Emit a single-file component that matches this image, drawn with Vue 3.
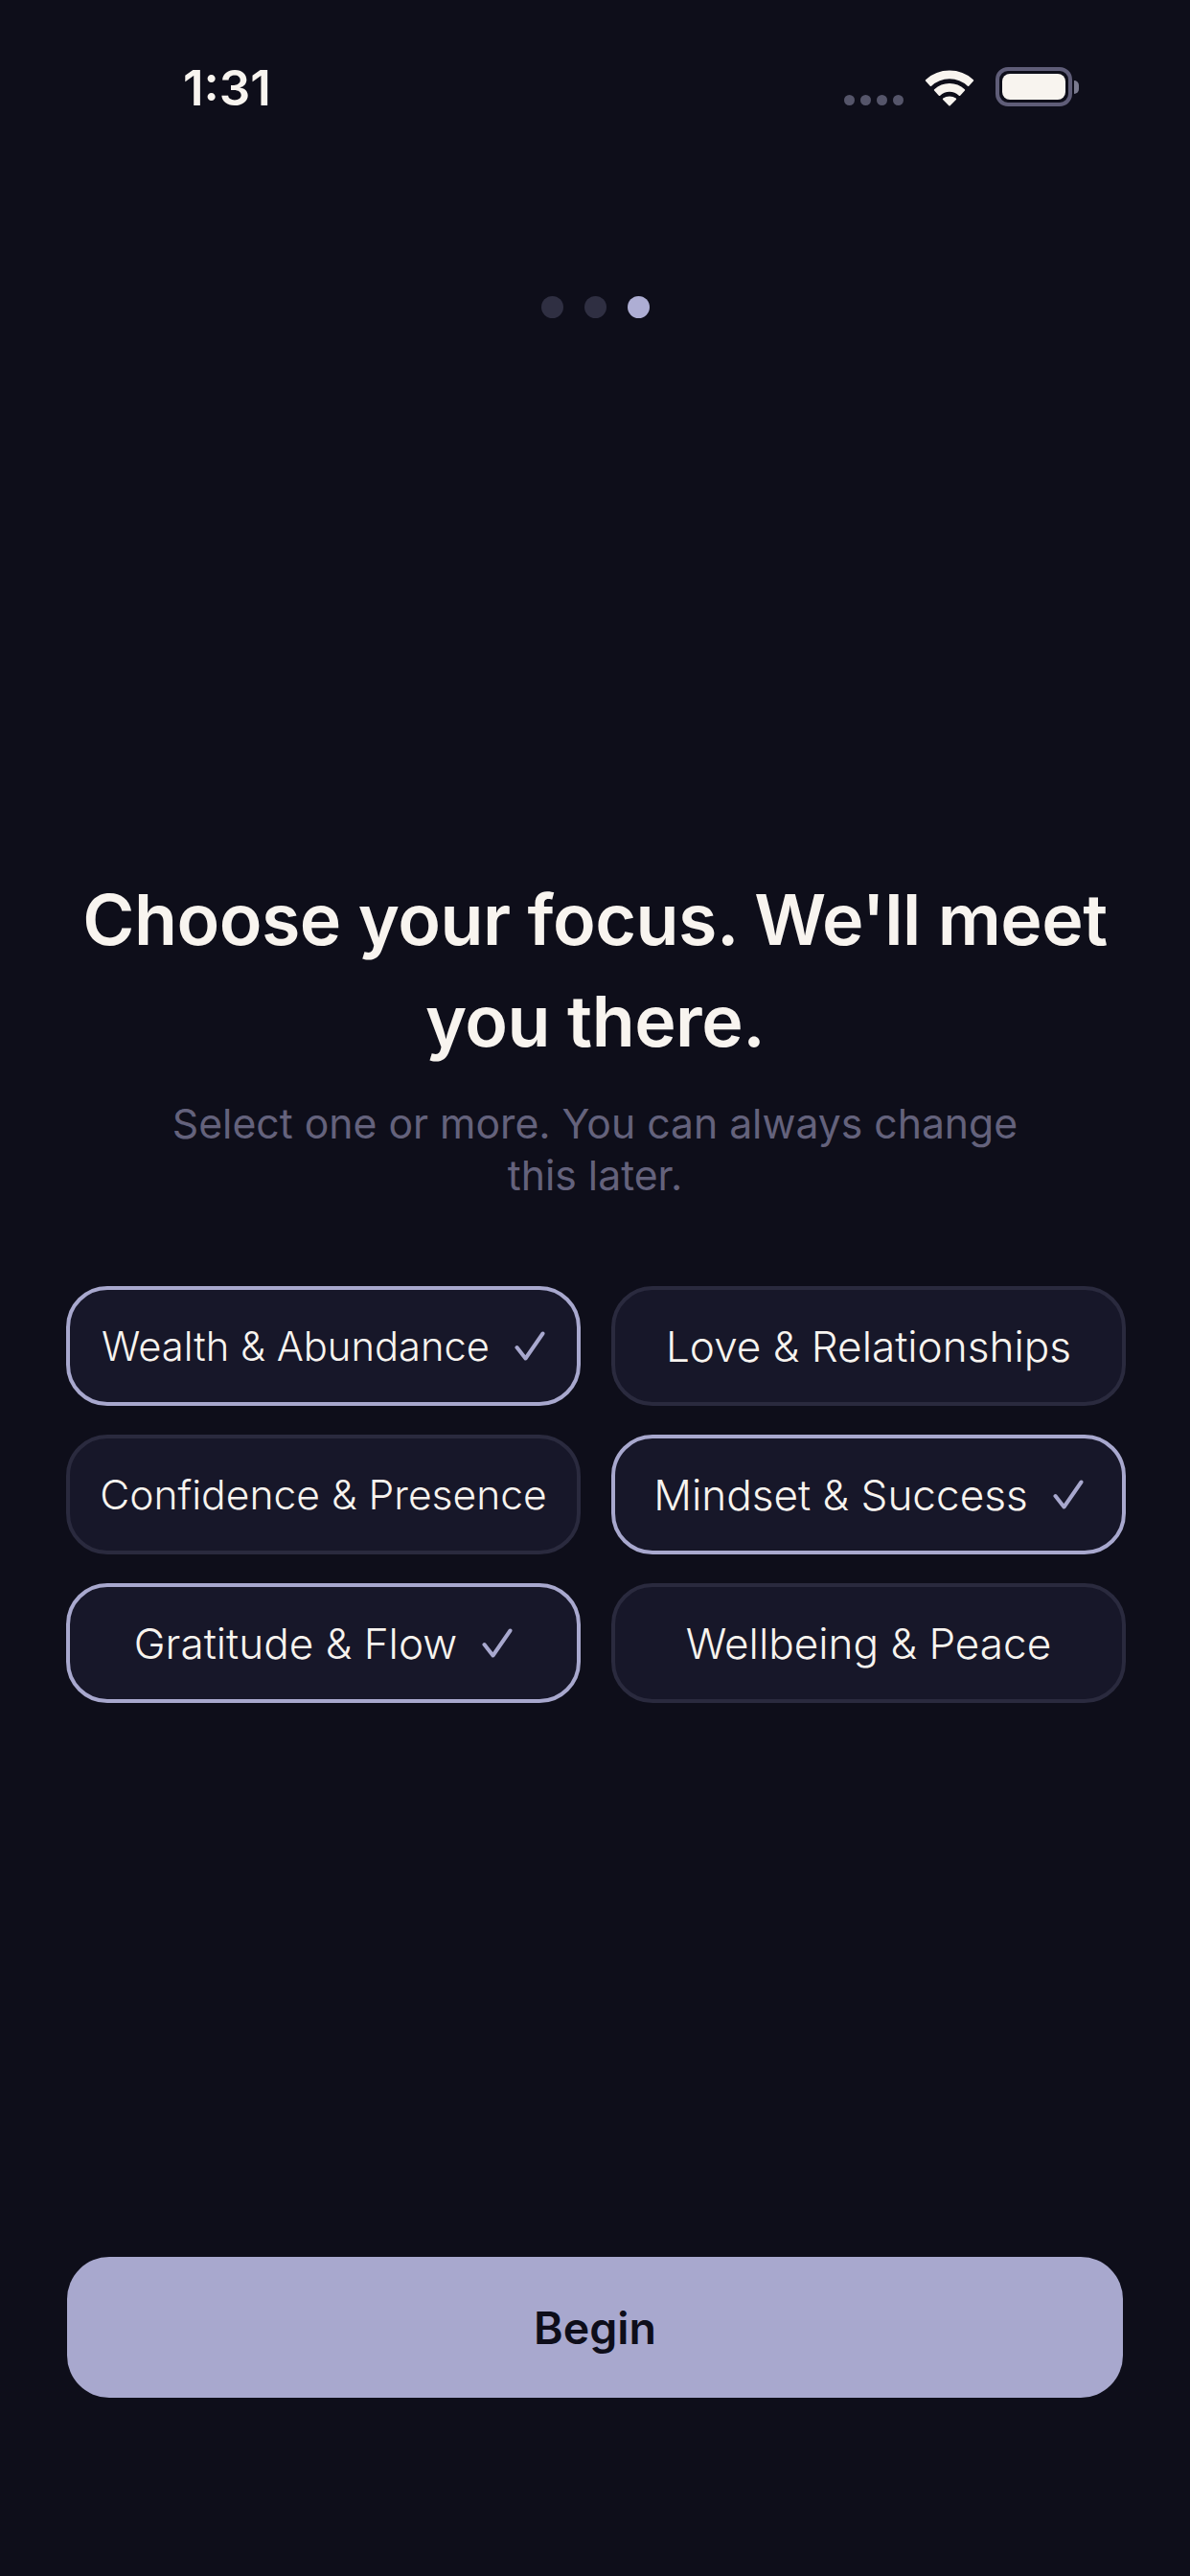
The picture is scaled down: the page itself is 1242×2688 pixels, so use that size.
<script setup>
const topics = [
  { label: 'Wealth & Abundance', on: true, fit: 'fit-sm' },
  { label: 'Love & Relationships', on: false, fit: '' },
  { label: 'Confidence & Presence', on: false, fit: 'fit-md' },
  { label: 'Mindset & Success', on: true, fit: '' },
  { label: 'Gratitude & Flow', on: true, fit: '' },
  { label: 'Wellbeing & Peace', on: false, fit: '' },
]
</script>

<template>
  <div class="screen">
    <header class="status">
      <span class="time">1:31</span>
      <div class="indicators">
        <div class="signal"><i></i><i></i><i></i><i></i></div>
        <svg class="wifi" width="54" height="40" viewBox="0 0 54 42">
          <path d="M1.5 13.5 A38 38 0 0 1 52.5 13.5 L47.5 19 A29.5 29.5 0 0 0 6.5 19 Z" fill="#f8f4ef" stroke="#f8f4ef" stroke-width="2" stroke-linejoin="round"/>
          <path d="M11 24 A24 24 0 0 1 43 24 L38 29.5 A15.5 15.5 0 0 0 16 29.5 Z" fill="#f8f4ef" stroke="#f8f4ef" stroke-width="2" stroke-linejoin="round"/>
          <path d="M20.5 34 A11 11 0 0 1 33.5 34 L27 40.5 Z" fill="#f8f4ef" stroke="#f8f4ef" stroke-width="2" stroke-linejoin="round"/>
        </svg>
        <div class="battery"><div class="cell"><div class="fill"></div></div><div class="nub"></div></div>
      </div>
    </header>

    <div class="dots"><i></i><i></i><i class="active"></i></div>

    <main class="content">
      <h1>Choose your focus. We'll meet you there.</h1>
      <p>Select one or more. You can always change this later.</p>
      <div class="grid">
        <button v-for="t in topics" :key="t.label" class="chip" :class="[t.fit, { on: t.on }]">
          <span>{{ t.label }}</span>
          <svg v-if="t.on" width="32" height="31" viewBox="0 0 32 31">
            <path d="M2.5 17 L11.5 28.5 L29.5 2.5" fill="none" stroke="#a8a8ce" stroke-width="4" stroke-linecap="round" stroke-linejoin="round"/>
          </svg>
        </button>
      </div>
    </main>

    <div class="footer"><button class="begin">Begin</button></div>
  </div>
</template>

<style>
html, body { margin: 0; background: #0e0e1a; }
</style>

<style scoped>
.screen {
  width: 1242px;
  height: 2688px;
  background: #0e0e1a;
  font-family: Inter, "Noto Sans", sans-serif;
  color: #f8f4ef;
  display: flex;
  flex-direction: column;
  box-sizing: border-box;
  overflow: hidden;
}
.status {
  height: 180px;
  box-sizing: border-box;
  padding: 62px 116px 0 191px;
  display: flex;
  justify-content: space-between;
  align-items: flex-start;
}
.time { font-size: 51px; font-weight: 600; line-height: 60px; }
.indicators { display: flex; align-items: center; height: 57px; }
.signal { display: flex; gap: 6px; margin: 28px 21px 0 0; }
.signal i { width: 11px; height: 11px; border-radius: 50%; background: #55556a; }
.wifi { margin-right: 21px; }
.battery { display: flex; align-items: center; }
.cell { width: 66px; height: 27px; border: 4px solid #5f5d78; border-radius: 13px; padding: 3px; box-sizing: content-box; }
.fill { width: 100%; height: 100%; background: #f8f4ef; border-radius: 8px; }
.nub { width: 5px; height: 14px; background: #7a7a8e; border-radius: 0 5px 5px 0; margin-left: 2px; }
.dots { display: flex; justify-content: center; gap: 22px; margin-top: 129px; }
.dots i { width: 23px; height: 23px; border-radius: 50%; background: #2f2f42; }
.dots i.active { background: #aeaed4; }
.content { margin-top: 575px; padding: 0 69px; flex: 1; }
h1 {
  margin: 0 auto;
  font-size: 73.5px;
  font-weight: 600;
  line-height: 106px;
  text-align: center;
  letter-spacing: -0.5px;
}
p {
  margin: 27px auto 0;
  width: 900px;
  text-align: center;
  font-size: 42.7px;
  line-height: 54px;
  color: #64627c;
}
.grid {
  margin-top: 88px;
  display: grid;
  grid-template-columns: 537px 537px;
  gap: 30px 32px;
}
.chip {
  height: 125px;
  box-sizing: border-box;
  border: 4px solid #2a2a3e;
  border-radius: 43px;
  background: #171729;
  color: #f8f4ef;
  font-family: inherit;
  font-size: 44.1px;
  font-weight: 350;
  display: flex;
  align-items: center;
  justify-content: center;
  gap: 26px;
  padding: 0;
}
.chip.fit-sm { font-size: 41.7px; }
.chip.fit-md { font-size: 42.6px; }
.chip.on { border-color: #a8a8ce; }
.footer { padding: 0 70px 186px; }
.begin {
  width: 100%;
  height: 147px;
  border: none;
  border-radius: 44px;
  background: #a8a8ce;
  color: #0e0e1a;
  font-family: inherit;
  font-size: 46.5px;
  font-weight: 600;
}
</style>
